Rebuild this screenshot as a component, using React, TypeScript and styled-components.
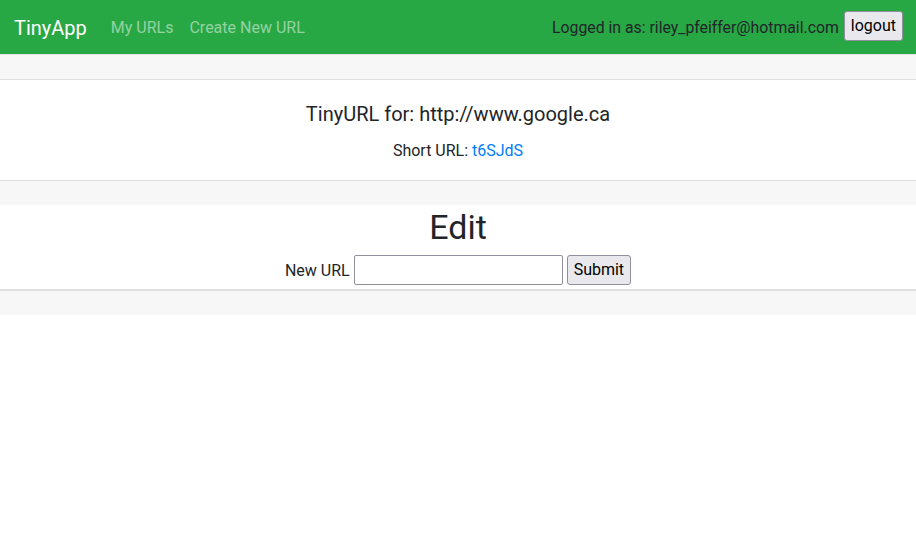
import React from "react";
import styled, { createGlobalStyle } from "styled-components";

const GlobalStyle = createGlobalStyle`
  html, body { margin: 0; padding: 0; background: #fff; }
  body {
    font-family: Roboto, "Noto Sans", "Liberation Sans", Arial, sans-serif;
    font-size: 16px;
    line-height: 1.5;
    color: #212529;
  }
  * { box-sizing: border-box; }
`;

const Navbar = styled.nav`
  height: 54px;
  background: #28a745;
  display: flex;
  align-items: center;
  justify-content: space-between;
  padding: 2px 13px 0 14px;
`;

const Left = styled.div`
  display: flex;
  align-items: center;
`;

const Brand = styled.a`
  font-size: 20px;
  color: #fff;
  margin-right: 16px;
  text-decoration: none;
`;

const NavLink = styled.a`
  color: rgba(255, 255, 255, 0.5);
  padding: 0 8px;
  text-decoration: none;
`;

const Right = styled.div`
  display: flex;
  align-items: center;
  gap: 5px;
`;

const UserText = styled.span`
  color: #212529;
  font-size: 15.8px;
`;

const NativeButton = styled.button<{ $lift?: number }>`
  font-family: inherit;
  font-size: 16px;
  line-height: 24px;
  padding: 1px 6px;
  border: 1px solid #8f8f9d;
  border-radius: 3px;
  background: #e9e9ed;
  color: #000;
  height: 30px;
  margin-top: ${(p) => (p.$lift ? -p.$lift : 0)}px;
`;

const Card = styled.section`
  display: flex;
  flex-direction: column;
`;

const CardHeader = styled.div`
  height: 26px;
  background: #f7f7f7;
  border-top: 1px solid #e4e4e4;
  border-bottom: 1px solid #dfdfdf;
`;

const CardFooter = styled.div<{ $double?: boolean }>`
  height: ${(p) => (p.$double ? 26 : 25)}px;
  background: #f7f7f7;
  border-top: ${(p) => (p.$double ? "2px" : "1px")} solid #dfdfdf;
`;

const CardBody = styled.div`
  padding: 22px 20px 17px;
  text-align: center;
`;

const Title = styled.h5`
  margin: 0 0 13px;
  font-size: 20px;
  font-weight: 400;
  line-height: 24px;
`;

const CardText = styled.p`
  margin: 0;
`;

const Link = styled.a`
  color: #007bff;
  text-decoration: none;
`;

const EditBody = styled.div`
  text-align: center;
  padding: 1px 0 4px;
`;

const EditTitle = styled.h1`
  margin: 0 0 6px;
  font-size: 34px;
  font-weight: 400;
  line-height: 43px;
`;

const Form = styled.form`
  display: flex;
  justify-content: center;
  align-items: center;
  gap: 4px;
  height: 30px;
`;

const Label = styled.span`
  padding-top: 2px;
`;

const Input = styled.input`
  width: 209px;
  height: 30px;
  border: 1px solid #8f8f9d;
  border-radius: 2px;
  padding: 1px 2px;
  font-family: inherit;
  font-size: 16px;
`;

export default function App() {
  return (
    <>
      <GlobalStyle />
      <Navbar>
        <Left>
          <Brand href="#">TinyApp</Brand>
          <NavLink href="#">My URLs</NavLink>
          <NavLink href="#">Create New URL</NavLink>
        </Left>
        <Right>
          <UserText>Logged in as: riley_pfeiffer@hotmail.com</UserText>
          <NativeButton type="button" $lift={5}>logout</NativeButton>
        </Right>
      </Navbar>
      <Card>
        <CardHeader />
        <CardBody>
          <Title>TinyURL for: http://www.google.ca</Title>
          <CardText>
            Short URL: <Link href="#">t6SJdS</Link>
          </CardText>
        </CardBody>
        <CardFooter />
      </Card>
      <Card>
        <EditBody>
          <EditTitle>Edit</EditTitle>
          <Form onSubmit={(e) => e.preventDefault()}>
            <Label>New URL</Label>
            <Input type="text" />
            <NativeButton type="submit">Submit</NativeButton>
          </Form>
        </EditBody>
        <CardFooter $double />
      </Card>
    </>
  );
}
